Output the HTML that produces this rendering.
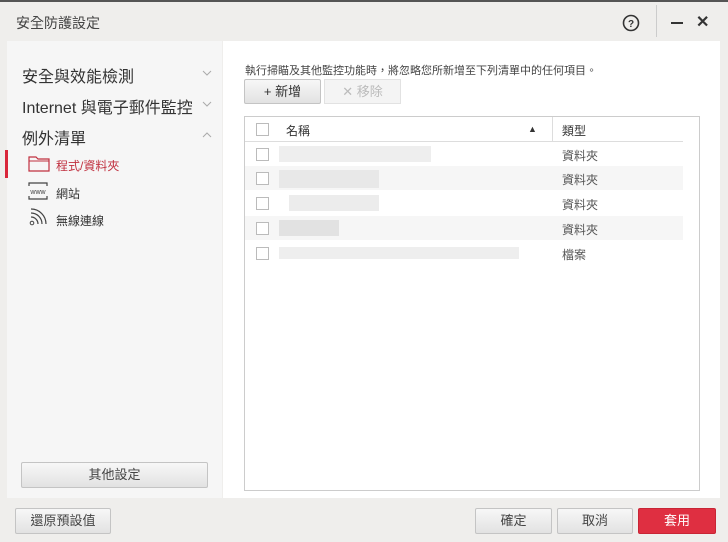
<!DOCTYPE html>
<html><head><meta charset="utf-8"><style>
*{margin:0;padding:0;box-sizing:border-box}
body{width:728px;height:542px;background:#efeeec;font-family:"Liberation Sans","Noto Sans CJK TC",sans-serif;color:#333;position:relative;overflow:hidden}
.abs{position:absolute}
.top{left:0;top:0;width:728px;height:2px;background:#555}
.title{left:16px;top:13px;font-size:14px;color:#444}
.side{left:7px;top:41px;width:215px;height:457px;background:#f6f6f6}
.main{left:223px;top:41px;width:497px;height:457px;background:#fff}
.nav{font-size:16px;color:#333;left:22px}
.sub{font-size:12px;left:56px}
.btn{border:1px solid #c4c4c4;border-radius:2px;background:linear-gradient(#f7f7f7,#e2e2e2);font-size:13px;color:#444;text-align:center}
.table{left:244px;top:116px;width:456px;height:375px;border:1px solid #ccc;background:#fff}
.cb{width:13px;height:13px;border:1px solid #bbb;background:#fff;position:absolute;left:11px}
.row{position:absolute;left:0;width:438px;height:24px}
.t{position:absolute;left:317px;font-size:12px;color:#555;top:5px}
.blur{position:absolute;background:#eee}
</style></head><body>
<div class="abs top"></div>
<div class="abs title">安全防護設定</div>
<svg class="abs" style="left:622px;top:14px" width="18" height="18"><circle cx="9" cy="9" r="7.5" fill="none" stroke="#333" stroke-width="1.6"/><text x="9" y="13" font-size="10" text-anchor="middle" font-family="Liberation Sans" font-weight="bold" fill="#333">?</text></svg>
<div class="abs" style="left:656px;top:5px;width:1px;height:32px;background:#ccc"></div>
<div class="abs" style="left:671px;top:22px;width:12px;height:2px;background:#333"></div>
<div class="abs" style="left:696px;top:12px;font-size:16px;font-weight:bold;color:#333">✕</div>
<div class="abs side"></div>
<div class="abs main"></div>
<div class="abs nav" style="top:63px">安全與效能檢測</div>
<div class="abs nav" style="top:94px">Internet 與電子郵件監控</div>
<div class="abs nav" style="top:125px">例外清單</div>
<svg class="abs" style="left:202px;top:70px" width="10" height="6"><path d="M1 1l4 4 4-4" fill="none" stroke="#aaa"/></svg>
<svg class="abs" style="left:202px;top:101px" width="10" height="6"><path d="M1 1l4 4 4-4" fill="none" stroke="#aaa"/></svg>
<svg class="abs" style="left:202px;top:132px" width="10" height="6"><path d="M1 5l4-4 4 4" fill="none" stroke="#aaa"/></svg>
<div class="abs" style="left:5px;top:150px;width:3px;height:28px;background:#d9263a"></div>
<svg class="abs" style="left:28px;top:155px" width="22" height="17"><path d="M1 2h7l2 2h11v12H1z" fill="none" stroke="#c0303f" stroke-width="1.2"/><path d="M1 6h20" stroke="#c0303f" stroke-width="1"/></svg>
<div class="abs sub" style="top:157px;color:#c0303f">程式/資料夾</div>
<svg class="abs" style="left:28px;top:182px" width="20" height="18"><path d="M1 4V1h18v3M1 14v3h18v-3" fill="none" stroke="#444" stroke-width="1.2"/><text x="10" y="12" font-size="7" text-anchor="middle" fill="#444" font-family="Liberation Sans">www</text></svg>
<div class="abs sub" style="top:185px">網站</div>
<svg class="abs" style="left:29px;top:208px" width="18" height="18"><circle cx="3" cy="15" r="1.8" fill="none" stroke="#444"/><path d="M2 9a7 7 0 0 1 7 7M2 5a11 11 0 0 1 11 11M2 1a15 15 0 0 1 15 15" fill="none" stroke="#444" stroke-width="1.2"/></svg>
<div class="abs sub" style="top:212px">無線連線</div>
<div class="abs btn" style="left:21px;top:462px;width:187px;height:26px;line-height:24px">其他設定</div>
<div class="abs" style="left:245px;top:62px;font-size:11px;color:#444">執行掃瞄及其他監控功能時，將忽略您所新增至下列清單中的任何項目。</div>
<div class="abs btn" style="left:244px;top:79px;width:77px;height:25px;line-height:23px;color:#333">+ 新增</div>
<div class="abs" style="left:324px;top:79px;width:77px;height:25px;line-height:23px;border:1px solid #e2e2e2;background:#f4f4f4;color:#bbb;font-size:13px;text-align:center">✕ 移除</div>
<div class="abs table">
 <div class="row" style="top:0;height:25px;border-bottom:1px solid #ddd"><div class="cb" style="top:6px"></div><span class="abs" style="left:41px;top:5px;font-size:12px">名稱</span><span class="abs" style="left:283px;top:7px;font-size:9px">▲</span><div class="abs" style="left:307px;top:0;width:1px;height:24px;background:#ddd"></div><span class="abs" style="left:317px;top:5px;font-size:12px">類型</span></div>
 <div class="row" style="top:25px"><div class="cb" style="top:6px"></div><div class="blur" style="left:34px;top:4px;width:152px;height:16px"></div><div class="t">資料夾</div></div>
 <div class="row" style="top:49px;background:#f6f6f6"><div class="cb" style="top:6px"></div><div class="blur" style="left:34px;top:4px;width:100px;height:18px;background:#e8e8e8"></div><div class="t">資料夾</div></div>
 <div class="row" style="top:74px"><div class="cb" style="top:6px"></div><div class="blur" style="left:44px;top:4px;width:90px;height:16px;background:#ececec"></div><div class="t">資料夾</div></div>
 <div class="row" style="top:99px;background:#f6f6f6"><div class="cb" style="top:6px"></div><div class="blur" style="left:34px;top:4px;width:60px;height:16px;background:#e2e2e2"></div><div class="t">資料夾</div></div>
 <div class="row" style="top:124px"><div class="cb" style="top:6px"></div><div class="blur" style="left:34px;top:6px;width:240px;height:12px;background:#eee"></div><div class="t">檔案</div></div>
</div>
<div class="abs btn" style="left:15px;top:508px;width:96px;height:26px;line-height:24px">還原預設值</div>
<div class="abs btn" style="left:475px;top:508px;width:77px;height:26px;line-height:24px">確定</div>
<div class="abs btn" style="left:557px;top:508px;width:76px;height:26px;line-height:24px">取消</div>
<div class="abs" style="left:638px;top:508px;width:78px;height:26px;line-height:24px;border:1px solid #c82535;border-radius:2px;background:#df2f41;color:#fff;font-size:13px;text-align:center">套用</div>
</body></html>
